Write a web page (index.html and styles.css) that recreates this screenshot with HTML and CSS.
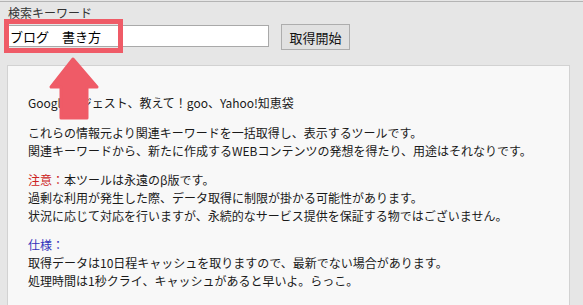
FILE: index.html
```html
<!DOCTYPE html>
<html lang="ja">
<head>
<meta charset="utf-8">
<title>関連キーワード取得ツール</title>
<link rel="stylesheet" href="styles.css">
</head>
<body>
<div class="topline"></div>
<form class="search">
  <label class="label" for="kw">検索キーワード</label>
  <div class="row">
    <input class="kw" id="kw" type="text" value="ブログ　書き方">
    <button class="btn" type="button">取得開始</button>
  </div>
</form>
<div class="panel">
  <p>Googleサジェスト、教えて！goo、Yahoo!知恵袋</p>
  <p>これらの情報元より関連キーワードを一括取得し、表示するツールです。<br>関連キーワードから、新たに作成するWEBコンテンツの発想を得たり、用途はそれなりです。</p>
  <p><span class="warn">注意：</span>本ツールは永遠のβ版です。<br>過剰な利用が発生した際、データ取得に制限が掛かる可能性があります。<br>状況に応じて対応を行いますが、永続的なサービス提供を保証する物ではございません。</p>
  <p><span class="spec">仕様：</span><br>取得データは10日程キャッシュを取りますので、最新でない場合があります。<br>処理時間は1秒クライ、キャッシュがあると早いよ。らっこ。</p>
</div>
<div class="highlight"></div>
<svg class="arrow" width="52" height="64" viewBox="0 0 52 64">
  <path d="M25 3 L3 31 L13 31 L13 62 L39 62 L39 31 L49 31 Z" fill="#ef5b67" stroke="#ef5b67" stroke-width="3" stroke-linejoin="round"/>
</svg>
</body>
</html>
```
FILE: styles.css
```css
html, body {
  margin: 0;
  padding: 0;
  background: #e6e6e6;
  overflow: hidden;
}
body {
  padding-top: 1px;
  font-family: "Noto Sans CJK JP", "Noto Sans", sans-serif;
  color: #1a1a1a;
  font-size: 12px;
  position: relative;
  height: 304px;
}
.topline {
  height: 0;
  border-top: 1px solid #b4b4b4;
}
.search {
  margin: 0;
  padding: 2px 0 0 8px;
}
.label {
  display: block;
  font-size: 12px;
  line-height: 18px;
  color: #333;
}
.row {
  display: flex;
  align-items: flex-start;
  gap: 12px;
  margin-top: 2px;
}
.kw {
  margin: 1px 0 0 0;
  box-sizing: border-box;
  width: 261px;
  height: 22px;
  padding: 0 1px;
  border: 1px solid #a9a9a9;
  background: #fff;
  font-family: "Noto Sans CJK JP", sans-serif;
  font-size: 13px;
  color: #000;
  outline: none;
}
.btn {
  box-sizing: border-box;
  width: 69px;
  height: 26px;
  margin: 0;
  padding: 0;
  border: 1px solid #adadad;
  background: #e1e1e1;
  font-family: "Noto Sans CJK JP", sans-serif;
  font-size: 13px;
  color: #111;
}
.panel {
  margin: 15px 0 0 7px;
  width: 563px;
  box-sizing: border-box;
  border: 1px solid #d2d2d2;
  border-bottom: 0;
  background: #f8f8f8;
  padding: 28px 20px 0 20px;
  height: 240px;
  overflow: hidden;
}
.panel p {
  margin: 0 0 11px 0;
  line-height: 18px;
  font-size: 12px;
}
.panel p:first-child {
  margin-bottom: 12px;
}
.panel p:last-child {
  margin-bottom: 0;
}
.warn {
  color: #cc2222;
}
.spec {
  color: #3333bb;
}
.highlight {
  position: absolute;
  left: 4px;
  top: 19px;
  width: 119px;
  height: 34px;
  box-sizing: border-box;
  border: 5px solid #ef5b67;
}
.arrow {
  position: absolute;
  left: 48px;
  top: 56px;
}
```
